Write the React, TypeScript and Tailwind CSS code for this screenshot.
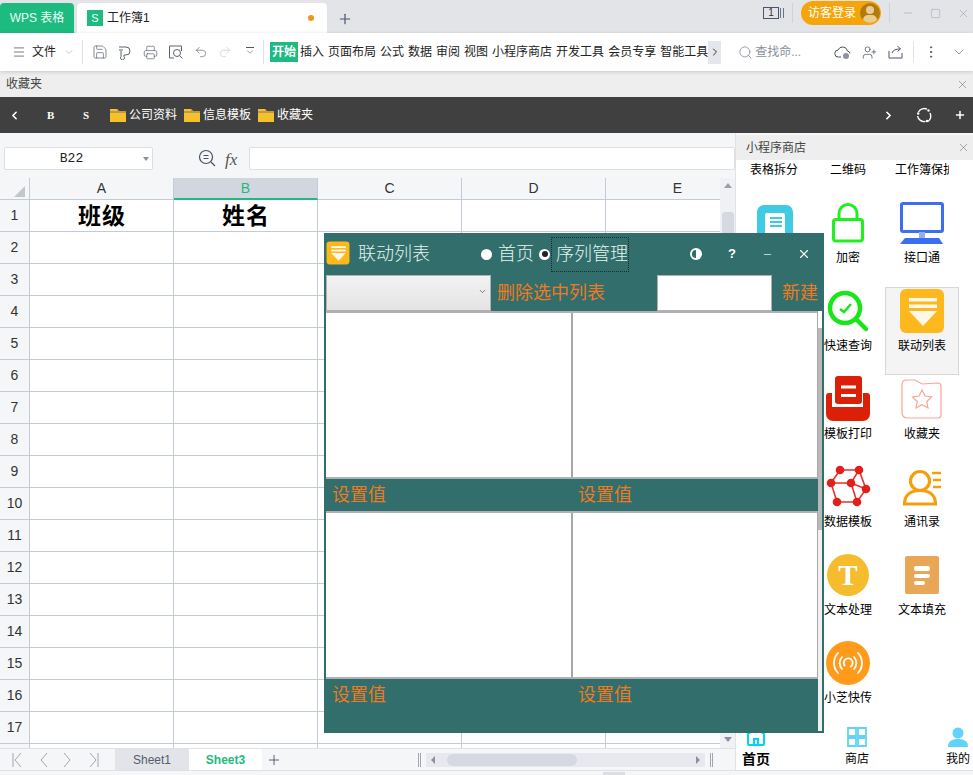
import { ChevronDown, ChevronLeft, ChevronRight, EllipsisVertical, Menu, Minus, Plus, Printer, Redo2, Save, Search, Square, Undo2, UserPlus, X } from "lucide-react";

const ribbonTabs = ["插入", "页面布局", "公式", "数据", "审阅", "视图", "小程序商店", "开发工具", "会员专享", "智能工具"];
const rowNumbers = Array.from({ length: 18 }, (_, i) => i + 1);

const Folder = () => (
  <svg width="16" height="15" viewBox="0 0 16 15" className="shrink-0">
    <path d="M0 1h7l2 2h7v11H0z" fill="#f5c02c" />
    <path d="M7 1l2 2h7v2H0V3h7z" fill="#b99a4a" />
  </svg>
);

const FunnelTile = ({ size }: { size: number }) => (
  <svg width={size} height={size} viewBox="0 0 46 46" className="block shrink-0">
    <rect x="1" y="1" width="44" height="44" rx="6" fill="#fdb81e" />
    <rect x="10" y="10" width="28" height="3.5" fill="#fff" opacity="0.9" />
    <rect x="10" y="16.5" width="28" height="3.5" fill="#fff" opacity="0.9" />
    <path d="M10 23h28L24 38z" fill="#fff" opacity="0.9" />
  </svg>
);

const SheetNavArrow = ({ flip, bar }: { flip?: boolean; bar?: boolean }) => (
  <svg width="12" height="16" viewBox="0 0 12 16" fill="none" stroke="#a0a5b0" className={flip ? "-scale-x-100" : ""}>
    {bar && <path d="M2 1v14" />}
    <path d="M10 1L4 8l6 7" />
  </svg>
);

const appIcons: Record<string, React.ReactNode> = {
  notebook: (
    <>
      <rect x="6" y="5" width="36" height="41" rx="7" fill="#3ecbe3" />
      <rect x="14" y="13" width="20" height="28" rx="2" fill="#fff" />
      <path d="M19 18h12M19 22h12M19 26h12" stroke="#3ecbe3" strokeWidth="2" />
    </>
  ),
  lock: (
    <>
      <rect x="8.5" y="19.5" width="29" height="21.5" rx="2.5" fill="#fff" stroke="#1ff01f" strokeWidth="3" />
      <path d="M14 19v-5.5a9 9 0 0 1 18 0V19" fill="none" stroke="#1ff01f" strokeWidth="3" />
    </>
  ),
  monitor: (
    <>
      <rect x="2.5" y="3.5" width="41" height="28" rx="1.5" fill="#fff" stroke="#3b6ef0" strokeWidth="3" />
      <rect x="20" y="32" width="6" height="6" fill="#8fb0f5" />
      <path d="M6 38h34l4 6H1z" fill="#3b6ef0" />
    </>
  ),
  search: (
    <>
      <circle cx="20" cy="20" r="15" fill="#fff" stroke="#19e619" strokeWidth="4.500" />
      <path d="M31 31l10 10" stroke="#19e619" strokeWidth="4.500" strokeLinecap="round" />
      <path d="M15 21l4 3 7-8" fill="none" stroke="#19e619" strokeWidth="2.500" />
    </>
  ),
  print: (
    <>
      <path d="M1 20a3 3 0 0 1 3-3h3v14h31V17h4a3 3 0 0 1 3 3v18a7 7 0 0 1-7 7H8a7 7 0 0 1-7-7z" fill="#dc2008" />
      <rect x="10" y="0" width="27" height="28" rx="3" fill="#dc2008" />
      <path d="M16 11h15M16 19.500h15" stroke="#fff" strokeWidth="3" />
    </>
  ),
  favorite: (
    <>
      <path d="M3 8a4 4 0 0 1 4-4h9l7 4 16-1a3 3 0 0 1 3 3v29a3 3 0 0 1-3 3H8a5 5 0 0 1-5-5z" fill="#fff" stroke="#f9a596" strokeWidth="1.2" />
      <path d="M23 14l3 6 6.500 1-4.700 4.500 1.200 6.500-6-3.200-6 3.200 1.200-6.500L13.500 21l6.500-1z" fill="#fff" stroke="#f9a596" strokeWidth="1.2" />
    </>
  ),
  network: (
    <>
      <path d="M15 6h19l7 19-9 13H12L6 19zM6 19h20l8-13M26 19l6 19M26 19l15 6" fill="none" stroke="#e4342a" strokeWidth="1.600" />
      {[[15, 6], [34, 6], [6, 19], [26, 19], [41, 25], [12, 38], [32, 38]].map(([cx, cy]) => (
        <circle key={`${cx}-${cy}`} cx={cx} cy={cy} r="4.300" fill="#e0201a" />
      ))}
    </>
  ),
  contact: (
    <>
      <circle cx="21" cy="17" r="9.500" fill="none" stroke="#f59e0b" strokeWidth="3.200" />
      <path d="M5.500 40c0-9 6-13.500 15.500-13.500S36.500 31 36.500 40z" fill="none" stroke="#f59e0b" strokeWidth="3.200" />
      <path d="M33 9h9M34 16h8M34 23h8" stroke="#f59e0b" strokeWidth="2.600" />
    </>
  ),
  text: (
    <>
      <circle cx="23" cy="23" r="21" fill="#f5bd2e" />
      <text x="23" y="33" textAnchor="middle" fill="#fff" fontSize="29" fontWeight="700" fontFamily="Liberation Serif, serif">T</text>
    </>
  ),
  fill: (
    <>
      <rect x="6" y="4" width="34" height="38" rx="2" fill="#e8a656" />
      <rect x="15" y="14" width="16" height="5" rx="2" fill="#fff" />
      <rect x="15" y="22" width="16" height="4" rx="2" fill="#fff" />
      <rect x="15" y="29" width="11" height="4" rx="2" fill="#fff" />
    </>
  ),
  transfer: (
    <>
      <circle cx="23" cy="23" r="22" fill="#ff9a1a" />
      <path d="M17 17a9 9 0 0 0 0 12M29 17a9 9 0 0 1 0 12M13 13a14.500 14.500 0 0 0 0 20M33 13a14.500 14.500 0 0 1 0 20" fill="none" stroke="#fff" strokeWidth="1.800" strokeLinecap="round" />
      <path d="M20 26a4.500 4.500 0 1 1 5 1" fill="none" stroke="#fff" strokeWidth="1.800" />
    </>
  ),
};

const apps = [
  { label: "表格拆分" }, { label: "二维码" }, { label: "工作簿保护" },
  { icon: "notebook" }, { label: "加密", icon: "lock" }, { label: "接口通", icon: "monitor" },
  {}, { label: "快速查询", icon: "search" }, { label: "联动列表", tile: true, active: true },
  {}, { label: "模板打印", icon: "print" }, { label: "收藏夹", icon: "favorite" },
  {}, { label: "数据模板", icon: "network" }, { label: "通讯录", icon: "contact" },
  {}, { label: "文本处理", icon: "text" }, { label: "文本填充", icon: "fill" },
  {}, { label: "小芝快传", icon: "transfer" }, {},
] as { label?: string; icon?: string; tile?: boolean; active?: boolean }[];

function TitleBar() {
  return (
    <div className="flex h-[33px] shrink-0 bg-[#e2e4e8]">
      <div className="mt-[3px] flex h-[30px] w-[74px] items-center justify-center rounded-t-[4px] bg-[#1dbb7f] text-[12px] text-[#eafff6]">WPS 表格</div>
      <div className="ml-[3px] mt-[3px] flex h-[30px] w-[250px] items-center rounded-t-[4px] bg-white pl-[10px] pr-[13px]">
        <div className="flex h-[16px] w-[16px] items-center justify-center bg-[#1dbb7f] text-[11px] leading-none text-white">S</div>
        <span className="ml-[4px] text-[12px] text-[#222]">工作簿1</span>
        <span className="ml-auto h-[6px] w-[6px] rounded-full bg-[#ee9a10]" />
      </div>
      <Plus className="ml-[10px] mt-[11px] text-[#4a5470]" size={16} strokeWidth={1.8} />
      <div className="ml-auto flex h-[26px] items-center">
        <div className="flex h-[12px] w-[16px] items-center justify-center border border-[#4a5470] text-[10px] leading-none text-[#333]">1</div>
        <div className="ml-[1px] h-[10px] w-[4px] border-x border-[#6a7488]" />
        <div className="ml-[8px] h-[20px] w-px bg-[#cfd2d8]" />
        <div className="ml-[8px] flex h-[24px] w-[80px] items-center rounded-full bg-[#f5a50a] pl-[7px] text-[12px] text-white">
          <span>访客登录</span>
          <span className="relative ml-[4px] h-[20px] w-[20px] overflow-hidden rounded-full bg-[#b07a10]">
            <span className="absolute left-[6px] top-[3px] h-[8px] w-[8px] rounded-full bg-[#e8cc90]" />
            <span className="absolute left-[3px] top-[12px] h-[10px] w-[14px] rounded-full bg-[#e8cc90]" />
          </span>
        </div>
        <div className="ml-[8px] h-[20px] w-px bg-[#cfd2d8]" />
        <Minus className="ml-[12px] text-[#8f96a6]" size={12} strokeWidth={1} />
        <Square className="ml-[16px] text-[#8f96a6]" size={11} strokeWidth={1} />
        <X className="ml-[16px] mr-[3px] text-[#8f96a6]" size={13} strokeWidth={1} />
      </div>
    </div>
  );
}

function Toolbar() {
  const iconColor = "#5a6272";
  return (
    <div className="relative z-10 flex h-[38px] shrink-0 items-center bg-white pl-[12px] text-[12px] text-[#222] shadow-[0_1px_4px_rgba(0,0,0,0.16)]">
      <Menu className="w-[14px] shrink-0" color="#444" size={16} strokeWidth={1.2} />
      <span className="ml-[6px] w-[24px]">文件</span>
      <ChevronDown className="ml-[7px] shrink-0" color="#999" size={12} strokeWidth={1} />
      <div className="ml-[7px] h-[24px] w-px bg-[#e0e2e6]" />
      <Save className="ml-[9px] shrink-0" color={iconColor} size={16} strokeWidth={1.1} />
      <svg className="ml-[10px] shrink-0" width="14" height="16" viewBox="0 0 14 16" fill="none" stroke={iconColor}>
        <path d="M1 3h7a4 4 0 0 1 0 8H6v1.500a2 2 0 1 1-3 0V7M1 6h4" />
      </svg>
      <Printer className="ml-[11px] shrink-0" color={iconColor} size={15} strokeWidth={1.1} />
      <svg className="ml-[10px] shrink-0" width="16" height="16" viewBox="0 0 16 16" fill="none" stroke={iconColor}>
        <path d="M6 14H1.500V2h12v5" />
        <circle cx="9" cy="9" r="3.500" />
        <path d="M11.500 11.500L14.500 14.500" />
      </svg>
      <Undo2 className="ml-[10px] shrink-0" color={iconColor} size={14} strokeWidth={1.1} />
      <Redo2 className="ml-[10px] shrink-0" color="#c4c7ce" size={14} strokeWidth={1.1} />
      <div className="ml-[13px] flex w-[10px] shrink-0 flex-col items-center">
        <div className="h-px w-[8px] bg-[#555]" />
        <ChevronDown className="-mt-[1px]" color="#555" size={10} strokeWidth={1.4} />
      </div>
      <div className="ml-[8px] h-[24px] w-px bg-[#e0e2e6]" />
      <span className="ml-[6px] flex h-[20px] w-[28px] items-center justify-center bg-[#1dbb7f] font-bold text-white">开始</span>
      <div className="ml-[2px] flex gap-[4px] whitespace-nowrap">
        {ribbonTabs.map((tab) => (
          <span key={tab}>{tab}</span>
        ))}
      </div>
      <div className="flex h-[23px] w-[13px] items-center justify-center bg-[#e4e6ec]">
        <ChevronRight color="#333" size={12} strokeWidth={2} />
      </div>
      <Search className="ml-[17px] shrink-0" color="#7a8294" size={15} strokeWidth={1.2} />
      <span className="ml-[2px] w-[46px] whitespace-nowrap text-[#8a8f9a]">查找命...</span>
      <svg className="ml-[33px] shrink-0" width="17" height="15" viewBox="0 0 17 15" fill="none" stroke="#4a5262">
        <path d="M7 12H4.500a3.500 3.500 0 0 1-.5-7A5 5 0 0 1 13.500 6a3 3 0 0 1 2.500 2.500" />
        <circle cx="12" cy="11" r="3" fill="#8a92a2" stroke="none" />
      </svg>
      <UserPlus className="ml-[11px] shrink-0" color="#4a5262" size={15} strokeWidth={1.2} />
      <svg className="ml-[11px] shrink-0" width="15" height="14" viewBox="0 0 15 14" fill="none" stroke="#4a5262">
        <path d="M1 6v7h13V8M4 8c1-3 4-4 8-4M9.500 1L12.500 4 9.500 6.500" />
      </svg>
      <div className="ml-[10px] h-[20px] w-px bg-[#e0e2e6]" />
      <EllipsisVertical className="ml-[9px] shrink-0" color="#555" size={16} strokeWidth={1.5} />
      <ChevronDown className="ml-[12px] shrink-0" color="#666" size={16} strokeWidth={1} />
    </div>
  );
}

function Bookmarks() {
  const folders = ["公司资料", "信息模板", "收藏夹"];
  return (
    <>
      <div className="flex h-[26px] shrink-0 items-center justify-between bg-[#eeeeee] pl-[6px] pr-[4px] text-[12px] text-[#444]">
        <span>收藏夹</span>
        <X color="#667" size={13} strokeWidth={1} />
      </div>
      <div className="flex h-[36px] shrink-0 items-center bg-[#404040] text-[12px] text-white">
        <ChevronLeft className="ml-[8px]" size={13} strokeWidth={3} />
        <span className="ml-[26px] w-[8px] font-['Liberation_Serif',serif] text-[11px] font-bold">B</span>
        <span className="ml-[28px] w-[8px] font-['Liberation_Serif',serif] text-[11px] font-bold">S</span>
        <div className="ml-[19px] flex gap-[7px]">
          {folders.map((name) => (
            <div key={name} className="flex items-center gap-[3px]">
              <Folder />
              <span>{name}</span>
            </div>
          ))}
        </div>
        <ChevronRight className="ml-auto" size={13} strokeWidth={3} />
        <svg className="ml-[21px]" width="16" height="16" viewBox="0 0 16 16" fill="none" stroke="#fff" strokeWidth="1.400">
          <path d="M2.500 5A6.500 6.500 0 0 1 11 2.200M14 6a6.500 6.500 0 0 1-2 8.500M9.500 14.400A6.500 6.500 0 0 1 1.600 9" />
          <circle cx="2.200" cy="6.500" r="1.200" fill="#fff" stroke="none" />
          <circle cx="12.500" cy="3.500" r="1.200" fill="#fff" stroke="none" />
          <circle cx="11" cy="14" r="1.200" fill="#fff" stroke="none" />
        </svg>
        <Plus className="ml-[22px] mr-[7px]" size={12} strokeWidth={3} />
      </div>
    </>
  );
}

function FormulaBar() {
  return (
    <div className="flex h-[45px] shrink-0 items-start bg-[#f5f6f8] pl-[4px] pt-[14px]">
      <div className="relative flex h-[23px] w-[149px] items-center justify-center rounded-[2px] border border-[#dcdee4] bg-white pr-[14px] font-['Liberation_Mono',monospace] text-[13px] text-[#222]">
        B22
        <span className="absolute right-[3px] top-[9px] h-0 w-0 border-x-[3px] border-t-[4px] border-x-transparent border-t-[#8a8f9a]" />
      </div>
      <svg className="ml-[45px] mt-[2px] shrink-0" width="18" height="18" viewBox="0 0 18 18" fill="none" stroke="#4a5262" strokeWidth="1.200">
        <circle cx="8" cy="8" r="6.500" />
        <path d="M5.500 6.500h5M5.500 9.500h5M13 13l4 4" />
      </svg>
      <span className="ml-[9px] w-[17px] font-['Liberation_Serif',serif] text-[17px] italic text-[#555]">fx</span>
      <div className="ml-[7px] h-[23px] flex-1 rounded-[2px] border border-[#dcdee4] bg-white" />
    </div>
  );
}

function SheetGrid() {
  const cellBorder = "border-b border-r border-[#c5cad8]";
  return (
    <div className="flex h-[570px] shrink-0 overflow-hidden">
      <div className="w-[720px] shrink-0 overflow-hidden bg-white">
        <div className="flex h-[22px] bg-[#f5f6f8] text-[14px] text-[#333]">
          <div className={`relative w-[30px] shrink-0 ${cellBorder}`}>
            <span className="absolute bottom-[2px] right-[4px] h-0 w-0 border-b-[11px] border-l-[11px] border-b-[#c4c6ca] border-l-transparent" />
          </div>
          <div className={`flex w-[144px] shrink-0 items-center justify-center ${cellBorder}`}>A</div>
          <div className="flex w-[144px] shrink-0 items-center justify-center border-b-2 border-r border-b-[#1dbb7f] border-r-[#c5cad8] bg-[#d2d6de] text-[#1dbb7f]">B</div>
          <div className={`flex w-[144px] shrink-0 items-center justify-center ${cellBorder}`}>C</div>
          <div className={`flex w-[144px] shrink-0 items-center justify-center ${cellBorder}`}>D</div>
          <div className={`flex w-[144px] shrink-0 items-center justify-center ${cellBorder}`}>E</div>
        </div>
        {rowNumbers.map((n) => (
          <div key={n} className="flex h-[32px]">
            {/* row 18 only peeks out under row 17, its number stays out of view */}
            <div className={`flex w-[30px] shrink-0 items-center justify-center bg-[#f5f6f8] text-[14px] text-[#333] ${cellBorder}`}>{n < 18 ? n : ""}</div>
            <div className={`flex w-[144px] shrink-0 items-center justify-center pl-px pt-px text-[23px] font-bold tracking-[1px] text-black ${cellBorder}`}>{n === 1 ? "班级" : ""}</div>
            <div className={`flex w-[144px] shrink-0 items-center justify-center pl-px pt-px text-[23px] font-bold tracking-[1px] text-black ${cellBorder}`}>{n === 1 ? "姓名" : ""}</div>
            <div className={`w-[144px] shrink-0 ${cellBorder}`} />
            <div className={`w-[144px] shrink-0 ${cellBorder}`} />
            <div className={`w-[144px] shrink-0 ${cellBorder}`} />
          </div>
        ))}
      </div>
      <div className="flex w-[15px] shrink-0 flex-col items-center bg-[#f0f1f5]">
        <span className="mt-[5px] h-0 w-0 border-x-[4px] border-b-[5px] border-x-transparent border-b-[#9aa0ae]" />
        <div className="mt-[24px] h-[50px] w-[12px] rounded-[3px] bg-[#d6d9e2]" />
        <span className="mb-[6px] mt-auto h-0 w-0 border-x-[4px] border-t-[5px] border-x-transparent border-t-[#8a90a0]" />
      </div>
    </div>
  );
}

function SheetTabs() {
  return (
    <div className="flex h-[22px] shrink-0 items-center border-t border-[#dfe1e7] bg-[#f5f6f8] text-[12px]">
      <div className="flex w-[115px] shrink-0 items-center gap-[13.500px] pl-[11px]">
        <SheetNavArrow bar />
        <SheetNavArrow />
        <SheetNavArrow flip />
        <SheetNavArrow flip bar />
      </div>
      <div className="flex h-full w-[74px] items-center justify-center bg-[#e2e4ea] text-[#555c6c]">Sheet1</div>
      <div className="flex h-full w-[73px] items-center justify-center bg-white font-bold text-[#1dbb7f]">Sheet3</div>
      <Plus className="ml-[4px]" color="#3a4256" size={16} strokeWidth={1.2} />
      <div className="ml-[136px] h-[14px] w-[3px] border-x border-[#a0a5b0]" />
      <div className="ml-[5px] flex h-[14px] w-[279px] items-center bg-[#e8e9ef] px-[5px]">
        <span className="h-0 w-0 border-y-[4px] border-r-[4px] border-y-transparent border-r-[#8a90a0]" />
        <div className="ml-[12px] h-[12px] w-[130px] rounded-[6px] bg-[#d6d9e2]" />
        <span className="ml-auto h-0 w-0 border-y-[4px] border-l-[4px] border-y-transparent border-l-[#8a90a0]" />
      </div>
      <div className="ml-[5px] h-[14px] w-[3px] border-x border-[#a0a5b0]" />
    </div>
  );
}

function AppCell({ label, icon, tile, active }: { label?: string; icon?: string; tile?: boolean; active?: boolean }) {
  return (
    <div className={`flex h-[88px] w-[74px] flex-col items-center ${active ? "border border-[#d8d8d8] bg-[#f4f4f4]" : "pt-px"}`}>
      <div className="h-[46px] w-[46px]">
        {tile && <FunnelTile size={46} />}
        {icon && (
          <svg width="46" height="46" viewBox="0 0 46 46" className="block">
            {appIcons[icon]}
          </svg>
        )}
      </div>
      {label && <div className="mt-[2px] h-[20px] w-[54px] overflow-hidden whitespace-nowrap text-center text-[12px] leading-[20px] text-black">{label}</div>}
    </div>
  );
}

function StorePanel() {
  return (
    <div className="flex w-[238px] shrink-0 flex-col border-l border-[#e0e2e8] bg-white">
      <div className="h-[2px] shrink-0 bg-[#f5f6f8]" />
      <div className="flex h-[25px] shrink-0 items-center justify-between bg-[#eeeeee] pl-[10px] pr-[3px] text-[12px] text-[#444]">
        <span>小程序商店</span>
        <X color="#667" size={13} strokeWidth={1} />
      </div>
      <div className="h-[567px] shrink-0 overflow-hidden pl-px">
        <div className="-mt-[49px] grid grid-cols-[74px_74px_74px]">
          {apps.map((app, i) => (
            <AppCell key={i} {...app} />
          ))}
        </div>
      </div>
      <div className="flex h-[43px] shrink-0 items-start justify-between pl-[6px] pr-px text-center text-[12px] text-black">
        <div className="w-[28px]">
          <svg width="20" height="20" viewBox="0 0 20 20" className="mx-auto block" fill="none" stroke="#00d4f5" strokeWidth="2">
            <path d="M2 7l8-6 8 6v10a1 1 0 0 1-1 1H3a1 1 0 0 1-1-1zM8 18v-6h4v6" />
          </svg>
          <div className="mt-[2px] text-[14px] font-bold leading-[20px]">首页</div>
        </div>
        <div className="w-[28px]">
          <svg width="20" height="20" viewBox="0 0 20 20" className="mx-auto block" fill="none" stroke="#5fd3fa" strokeWidth="1.800">
            <path d="M1 1h8v8H1zM11 1h8v8h-8zM1 11h8v8H1zM11 11h8v8h-8z" />
          </svg>
          <div className="mt-[2px] leading-[20px]">商店</div>
        </div>
        <div className="w-[28px]">
          <svg width="20" height="20" viewBox="0 0 20 20" className="mx-auto block" fill="#5fd3fa">
            <circle cx="10" cy="6" r="5.500" />
            <path d="M0 20c0-6 4-8 10-8s10 2 10 8z" />
          </svg>
          <div className="mt-[2px] leading-[20px]">我的</div>
        </div>
      </div>
    </div>
  );
}

function ListPair() {
  return (
    <div className="flex h-[168px] border-y-2 border-t-[#b0b0b4] border-b-[#b0b0b4] bg-white">
      <div className="w-[247px] border-r-2 border-r-[#a8a8ac]" />
      <div className="flex-1 border-r border-r-[#a8a8ac]" />
    </div>
  );
}

function ValueRow({ tall }: { tall?: boolean }) {
  return (
    <div className={`flex ${tall ? "h-[52px]" : "h-[32px]"} pl-[6px] text-[18px] font-normal leading-[32px] text-[#ee7a22]`}>
      <span className="w-[246px]">设置值</span>
      <span>设置值</span>
    </div>
  );
}

function LinkedListDialog() {
  return (
    <div className="absolute left-[324px] top-[233px] flex h-[500px] w-[500px] flex-col bg-[#316e6c] px-[2px] font-light">
      <div className="flex h-[42px] shrink-0 items-center text-[18px] text-[#e4f4ef]">
        <div className="mt-[-3px]"><FunnelTile size={24} /></div>
        <span className="ml-[8px] w-[72px] whitespace-nowrap">联动列表</span>
        <span className="ml-[51px] h-[11px] w-[11px] rounded-full bg-white" />
        <span className="ml-[6px] w-[36px] whitespace-nowrap">首页</span>
        <span className="ml-[5px] flex h-[11px] w-[11px] items-center justify-center rounded-full bg-white">
          <span className="h-[6px] w-[6px] rounded-full bg-[#222]" />
        </span>
        <span className="ml-px flex h-[35px] w-[78px] items-center whitespace-nowrap border border-dotted border-[#1a2a2a] pl-[4px]">序列管理</span>
        <svg className="ml-[60px] shrink-0" width="14" height="14" viewBox="0 0 14 14">
          <circle cx="7" cy="7" r="6" fill="#fff" />
          <path d="M7 3a4 4 0 0 0 0 8z" fill="#316e6c" />
        </svg>
        <span className="ml-[25px] w-[10px] text-[13px] font-bold text-white">?</span>
        <Minus className="ml-[24px]" color="#fff" size={11} strokeWidth={1.5} />
        <X className="ml-[24px]" color="#fff" size={14} strokeWidth={2} />
      </div>
      <div className="flex h-[36px] shrink-0 items-stretch text-[18px] font-normal text-[#ee7a22]">
        <div className="relative w-[165px] border border-[#b0b0b0] bg-gradient-to-b from-[#f2f2f2] to-[#e4e4e4]">
          <ChevronDown className="absolute right-[3px] top-[11px]" color="#555" size={9} strokeWidth={2} />
        </div>
        <span className="ml-[6px] w-[108px] whitespace-nowrap leading-[36px]">删除选中列表</span>
        <div className="ml-[52px] w-[115px] border border-[#b0b0b0] bg-white" />
        <span className="ml-[10px] whitespace-nowrap leading-[36px]">新建</span>
      </div>
      <div className="flex min-h-0 flex-1">
        <div className="w-[492px] shrink-0">
          <ListPair />
          <ValueRow />
          <ListPair />
          <ValueRow tall />
        </div>
        <div className="mb-[2px] flex w-[4px] shrink-0 flex-col bg-[#f0f0f0]">
          <div className="h-[17px] bg-white" />
          <div className="h-[202px] bg-[#b9b9b9]" />
        </div>
      </div>
    </div>
  );
}

export default function App() {
  return (
    <div className="relative flex h-[775px] w-[973px] flex-col overflow-hidden bg-[#f5f6f8] font-['Liberation_Sans','Noto_Sans_CJK_SC',sans-serif]">
      <TitleBar />
      <Toolbar />
      <Bookmarks />
      <div className="flex h-[637px] shrink-0">
        <div className="flex w-[735px] shrink-0 flex-col">
          <FormulaBar />
          <SheetGrid />
          <SheetTabs />
        </div>
        <StorePanel />
      </div>
      <div className="relative flex-1 border-t border-[#dfe1e7]">
        <div className="absolute bottom-0 left-[603px] h-[3px] w-[22px] bg-[#dcdee4]" />
      </div>
      <LinkedListDialog />
    </div>
  );
}
